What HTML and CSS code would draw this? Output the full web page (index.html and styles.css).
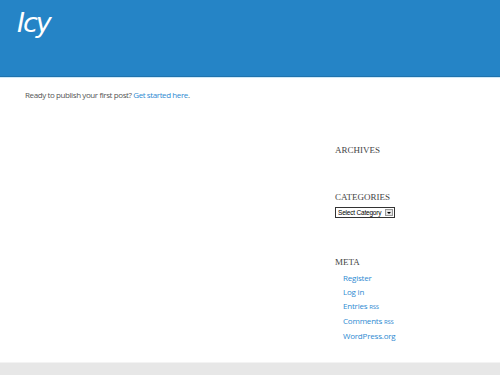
FILE: index.html
```html
<!DOCTYPE html>
<html lang="en">
<head>
    <meta charset="UTF-8">
    <meta name="viewport" content="width=device-width, initial-scale=1.0">
    <title>Icy</title>
    <link rel="stylesheet" href="styles.css">
</head>
<body>
    <!-- Header -->
    <header class="site-header">
        <a class="site-title" href="#">Icy</a>
    </header>

    <div class="site-body">
        <main class="content">
            <p class="no-posts">Ready to publish your first post? <a href="#">Get started here</a>.</p>
        </main>

        <!-- Sidebar widgets -->
        <aside class="sidebar">
            <section class="widget widget-archives">
                <h3 class="widget-title">Archives</h3>
            </section>

            <section class="widget widget-categories">
                <h3 class="widget-title">Categories</h3>
                <div class="fake-select">
                    <span class="fake-select-text">Select Category</span>
                    <span class="fake-select-btn"><span class="arrow"></span></span>
                </div>
            </section>

            <section class="widget widget-meta">
                <h3 class="widget-title">Meta</h3>
                <ul>
                    <li><a href="#">Register</a></li>
                    <li><a href="#">Log in</a></li>
                    <li><a href="#">Entries <abbr>RSS</abbr></a></li>
                    <li><a href="#">Comments <abbr>RSS</abbr></a></li>
                    <li><a href="#">WordPress.org</a></li>
                </ul>
            </section>
        </aside>
    </div>

    <footer class="site-footer"></footer>
</body>
</html>
```

FILE: styles.css
```css
body {
    margin: 0;
    font-family: "Open Sans", Arial, sans-serif;
    color: #555;
    background-color: #fff;
    height: 375px;
    display: flex;
    flex-direction: column;
    overflow: hidden;
}

a {
    color: #2e8ad2;
    text-decoration: none;
}

.site-header {
    flex-shrink: 0;
    height: 76px;
    background-color: #2584c6;
    border-bottom: 1px solid #1f73ad;
    box-shadow: 0 1px 0 #cfe8f7;
    padding: 0 0 0 17px;
}

.site-title {
    display: inline-block;
    margin-top: 7px;
    color: #fff;
    font-family: "DejaVu Sans", sans-serif;
    font-style: italic;
    font-size: 27px;
    letter-spacing: -2px;
}

.site-body {
    flex: 1;
    min-height: 0;
    overflow: hidden;
    display: grid;
    grid-template-columns: 1fr 165px;
}

.content {
    padding: 12px 25px;
}

.no-posts {
    margin: 0;
    font-size: 8px;
    letter-spacing: -0.4px;
}

.sidebar {
    padding-top: 68px;
}

.widget {
    margin-bottom: 39px;
}

.widget-archives {
    margin-bottom: 37px;
}

.widget-title {
    margin: 0 0 4px;
    font-family: "Liberation Serif", "Times New Roman", serif;
    font-weight: normal;
    font-size: 9px;
    line-height: 10px;
    text-transform: uppercase;
    color: #444;
}

.widget-categories .widget-title {
    margin-bottom: 5px;
}

.fake-select {
    display: flex;
    align-items: center;
    justify-content: space-between;
    width: 58px;
    height: 9px;
    border: 1px solid #333;
    background: #fff;
    font-family: Arial, "Liberation Sans", sans-serif;
    font-size: 6.5px;
    letter-spacing: -0.2px;
    color: #000;
}

.fake-select-text {
    padding-left: 2px;
    white-space: nowrap;
}

.fake-select-btn {
    width: 8px;
    height: 7px;
    margin-right: 1px;
    background: #e4e4e4;
    border: 1px solid #999;
    box-sizing: border-box;
    display: flex;
    align-items: center;
    justify-content: center;
}

.arrow {
    border-left: 2px solid transparent;
    border-right: 2px solid transparent;
    border-top: 2px solid #000;
}

.widget ul {
    list-style: none;
    margin: 0;
    padding: 0 0 0 8px;
}

.widget li {
    font-size: 8px;
    line-height: 14px;
    letter-spacing: -0.2px;
}

abbr {
    font-size: 6px;
}

.site-footer {
    flex-shrink: 0;
    height: 12px;
    background-color: #e7e7e7;
    border-top: 1px solid #f3f3f3;
}
```
